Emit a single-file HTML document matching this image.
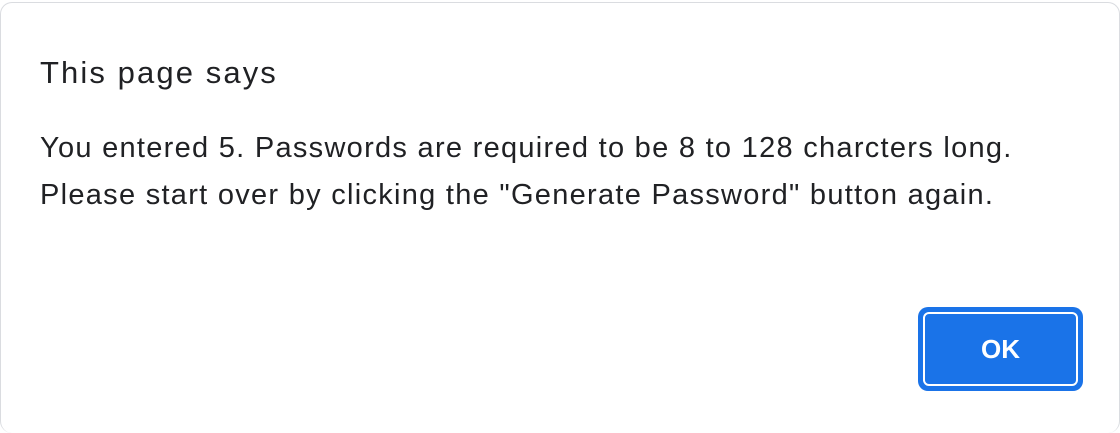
<!DOCTYPE html>
<html><head><style>
html,body{margin:0;padding:0;background:#fff;}
body{width:1120px;height:425px;position:relative;overflow:hidden;font-family:"Liberation Sans",sans-serif;color:#202124;}
.frame{position:absolute;left:0;top:2px;width:1118px;height:430px;border:1px solid #dadce0;border-radius:12px;border-bottom:none;}
.title{position:absolute;left:40px;top:55px;font-size:31px;white-space:nowrap;letter-spacing:2.1px;}
.msg{position:absolute;left:40px;top:125px;font-size:29px;line-height:47px;white-space:nowrap;letter-spacing:1.28px;}
.btn{position:absolute;left:918px;top:307px;width:165px;height:84px;box-sizing:border-box;background:#1a73e8;border-radius:10px;}
.btn .in{position:absolute;left:5px;top:5px;right:5px;bottom:5px;border:2px solid #fff;border-radius:6px;color:#fff;font-size:26px;font-weight:bold;display:flex;align-items:center;justify-content:center;}
</style></head><body>
<div class="frame"></div>
<div class="title">This page says</div>
<div class="msg">You entered 5. Passwords are required to be 8 to 128 charcters long.<br>Please start over by clicking the "Generate Password" button again.</div>
<div class="btn"><div class="in">OK</div></div>
</body></html>
